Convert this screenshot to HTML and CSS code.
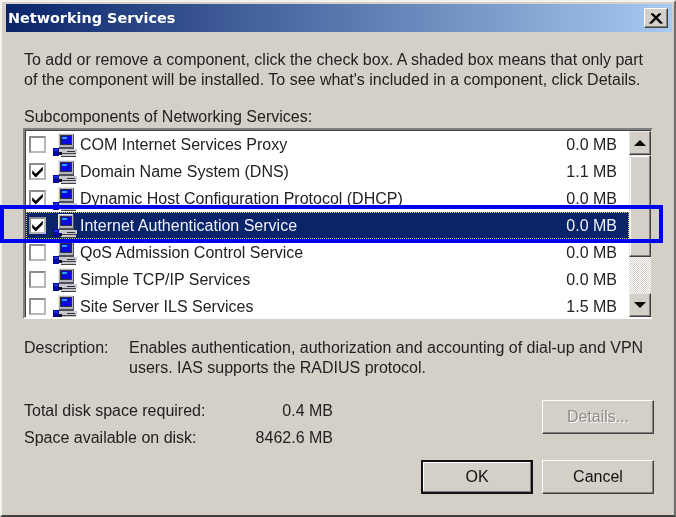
FILE: index.html
```html
<!DOCTYPE html>
<html lang="en">
<head>
<meta charset="utf-8">
<title>Networking Services</title>
<link rel="stylesheet" href="styles.css">
</head>
<body>
<svg class="defs" width="0" height="0" aria-hidden="true">
  <symbol id="pc" viewBox="0 0 24 26">
    <path d="M5 1h15v1h1v15h-2v2h-11v-2h-3z" fill="#b4b4bc"/>
    <path d="M5 1h15v1h-15zM5 2h1v14h-1z" fill="#e8e8e8"/>
    <path d="M20 2h1v15h-1zM6 15h14v2h-14z" fill="#50505a"/>
    <rect x="7" y="3" width="12" height="10" fill="#303040"/>
    <rect x="8" y="4" width="10" height="8" fill="#0808e0"/>
    <rect x="9" y="5" width="5" height="2" fill="#28a0f8"/>
    <path d="M6 17h18v4h-1v3h-15v-2h-2z" fill="#c8c8cc"/>
    <path d="M14 19h8v1h-8z" fill="#303038"/>
    <path d="M6 21h17v1h-17zM8 24h15v1h-15z" fill="#404048"/>
    <path d="M6 20h3v3h-3z" fill="#101018"/>
    <rect x="0" y="16" width="6" height="8" fill="#0808a0"/>
    <rect x="1" y="17" width="4" height="2" fill="#1830e0"/>
  </symbol>
</svg>
<div class="window">
  <header class="titlebar">
    <span class="title">Networking Services</span>
    <button class="close" aria-label="Close"><svg width="14" height="11" viewBox="0 0 14 11"><path d="M2 0.5l10 10M3.5 0.5l10 10M12 0.5l-10 10M10.5 0.5l-10 10" stroke="#000" stroke-width="1.1" fill="none"/></svg></button>
  </header>
  <main class="content">
    <p class="intro">To add or remove a component, click the check box. A shaded box means that only part<br>of the component will be installed. To see what's included in a component, click Details.</p>
    <div class="list-label">Subcomponents of Networking Services:</div>
    <div class="listbox">
      <ul class="rows">
        <li class="row"><span class="check"></span><svg class="icon"><use href="#pc"/></svg><span class="name">COM Internet Services Proxy</span><span class="size">0.0 MB</span></li>
        <li class="row"><span class="check on"><svg viewBox="0 0 11 11"><path d="M1 4.5l3 3 6-6v3l-6 6-3-3z"/></svg></span><svg class="icon"><use href="#pc"/></svg><span class="name">Domain Name System (DNS)</span><span class="size">1.1 MB</span></li>
        <li class="row"><span class="check on"><svg viewBox="0 0 11 11"><path d="M1 4.5l3 3 6-6v3l-6 6-3-3z"/></svg></span><svg class="icon"><use href="#pc"/></svg><span class="name">Dynamic Host Configuration Protocol (DHCP)</span><span class="size">0.0 MB</span></li>
        <li class="row selected"><span class="check on"><svg viewBox="0 0 11 11"><path d="M1 4.5l3 3 6-6v3l-6 6-3-3z"/></svg></span><svg class="icon"><use href="#pc"/></svg><span class="name">Internet Authentication Service</span><span class="size">0.0 MB</span></li>
        <li class="row"><span class="check"></span><svg class="icon"><use href="#pc"/></svg><span class="name">QoS Admission Control Service</span><span class="size">0.0 MB</span></li>
        <li class="row"><span class="check"></span><svg class="icon"><use href="#pc"/></svg><span class="name">Simple TCP/IP Services</span><span class="size">0.0 MB</span></li>
        <li class="row"><span class="check"></span><svg class="icon"><use href="#pc"/></svg><span class="name">Site Server ILS Services</span><span class="size">1.5 MB</span></li>
      </ul>
      <div class="scrollbar">
        <div class="sb-btn"><span class="arrow up"></span></div>
        <div class="sb-thumb"></div>
        <div class="sb-track"></div>
        <div class="sb-btn"><span class="arrow down"></span></div>
      </div>
    </div>
    <div class="desc">
      <div class="desc-label">Description:</div>
      <div class="desc-text">Enables authentication, authorization and accounting of dial-up and VPN<br>users. IAS supports the RADIUS protocol.</div>
    </div>
    <div class="bottom">
      <div class="disk">
        <div class="disk-row"><span class="disk-label">Total disk space required:</span><span class="disk-val">0.4 MB</span></div>
        <div class="disk-row"><span class="disk-label">Space available on disk:</span><span class="disk-val">8462.6 MB</span></div>
      </div>
      <div class="actions">
        <button class="btn disabled">Details...</button>
        <div class="action-row">
          <button class="btn default">OK</button>
          <button class="btn">Cancel</button>
        </div>
      </div>
    </div>
  </main>
  <div class="highlight"></div>
</div>
</body>
</html>
```
FILE: styles.css
```css
* { box-sizing: border-box; }
html, body { margin: 0; padding: 0; }
body { width: 676px; height: 517px; overflow: hidden; background: #d4d0c8; }
.defs { position: absolute; }

.window {
  position: relative;
  width: 676px;
  height: 517px;
  padding: 2px 2px 0 4px;
  background: #d4d0c8;
  border-top: 2px solid #f4f2ee;
  border-left: 2px solid #f4f2ee;
  border-right: 2px solid #6e6c68;
  border-bottom: 2px solid #404040;
  font: 16px/20px "Liberation Sans", Arial, sans-serif;
  color: #222;
  filter: blur(0.35px);
}

.titlebar {
  height: 28px;
  display: flex;
  align-items: center;
  justify-content: space-between;
  padding: 0 4px 0 2px;
  background: linear-gradient(90deg, #0a246a, #a6caf0);
  color: #fff;
}
.title { font: 700 14.4px/20px "DejaVu Sans", sans-serif; }
.close {
  width: 24px;
  height: 20px;
  padding: 0;
  display: flex;
  align-items: center;
  justify-content: center;
  background: #d4d0c8;
  border: 1px solid;
  border-color: #fff #404040 #404040 #fff;
  box-shadow: inset -1px -1px 0 #808080;
}

.content { padding: 0 18px 0 18px; }
.intro { margin: 18px 0 0; line-height: 20px; white-space: nowrap; }
.list-label { margin-top: 17px; line-height: 20px; }

.listbox {
  display: flex;
  height: 191px;
  margin-top: 1px;
  margin-left: -1px;
  width: 630px;
  padding-top: 1px;
  background: #fff;
  border: 2px solid;
  border-color: #808080 #d4d0c8 #fff #808080;
  box-shadow: inset 1px 1px 0 #404040;
  overflow: hidden;
}
.rows { flex: 1; margin: 0; padding: 0 0 0 1px; list-style: none; min-width: 0; }
.row {
  display: flex;
  align-items: center;
  height: 27px;
  padding: 0 12px 0 3px;
  white-space: nowrap;
}
.check {
  width: 17px;
  height: 17px;
  flex: none;
  background: #fff;
  border: 2px solid;
  border-color: #8c8c8c #b8b8b8 #b8b8b8 #8c8c8c;
  display: flex;
  align-items: center;
  justify-content: center;
}
.check svg { width: 13px; height: 13px; fill: #000; flex: none; }
.icon { width: 24px; height: 26px; flex: none; margin: 0 3px 0 7px; }
.name { flex: 1; }
.size { flex: none; }

.selected {
  background: #0a246a;
  color: #f0f0f8;
  outline: 1px dotted #e8c878;
  outline-offset: -1px;
}

.scrollbar { width: 22px; flex: none; display: flex; flex-direction: column; background: #d4d0c8; }
.sb-btn {
  height: 24px;
  flex: none;
  display: flex;
  align-items: center;
  justify-content: center;
  background: #d4d0c8;
  border: 1px solid;
  border-color: #e8e6e0 #404040 #404040 #e8e6e0;
  box-shadow: inset -1px -1px 0 #808080;
}
.sb-thumb {
  height: 102px;
  flex: none;
  background: #d4d0c8;
  border: 1px solid;
  border-color: #e8e6e0 #404040 #404040 #e8e6e0;
  box-shadow: inset -1px -1px 0 #808080, inset 1px 1px 0 #fff;
}
.sb-track { flex: 1; background: repeating-conic-gradient(#fff 0 25%, #d4d0c8 0 50%) 0 0 / 2px 2px; }
.arrow { width: 0; height: 0; border-left: 6px solid transparent; border-right: 6px solid transparent; }
.arrow.up { border-bottom: 6px solid #000; }
.arrow.down { border-top: 6px solid #000; }

.desc { display: flex; margin-top: 19px; }
.desc-label { width: 105px; flex: none; }
.desc-text { white-space: nowrap; }

.bottom { display: flex; justify-content: space-between; margin-top: 19px; }
.disk { width: 309px; }
.disk-row { display: flex; justify-content: space-between; height: 27px; align-items: center; }

.actions { display: flex; flex-direction: column; align-items: flex-end; width: 233px; margin-top: 3px; }
.action-row { display: flex; gap: 9px; margin-top: 26px; }
.btn {
  width: 112px;
  height: 34px;
  padding: 0;
  font: inherit;
  color: #111;
  background: #d4d0c8;
  border: 1px solid;
  border-color: #fff #404040 #404040 #fff;
  box-shadow: inset -1px -1px 0 #808080;
}
.btn.default { border: 2px solid #111; box-shadow: inset -1px -1px 0 #808080, inset 1px 1px 0 #fff; }
.btn.disabled { color: #8e8c88; text-shadow: 1px 1px 0 #fff; }

.highlight {
  position: absolute;
  left: -2px;
  top: 203px;
  width: 663px;
  height: 38px;
  border: 4px solid #0000f0;
}
```
